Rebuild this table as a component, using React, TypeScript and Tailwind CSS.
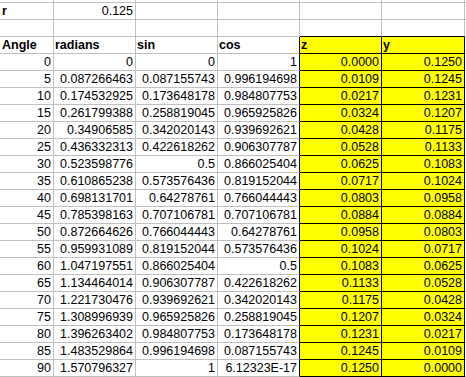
import React from "react";

type Cell = { text?: string; bold?: boolean; right?: boolean };

const widths = ["w-[54px]", "w-[82px]", "w-[82px]", "w-[82px]", "w-[82px]", "w-[83px]"];

const data: string[][] = [
  ["0", "0", "0", "1", "0.0000", "0.1250"],
  ["5", "0.087266463", "0.087155743", "0.996194698", "0.0109", "0.1245"],
  ["10", "0.174532925", "0.173648178", "0.984807753", "0.0217", "0.1231"],
  ["15", "0.261799388", "0.258819045", "0.965925826", "0.0324", "0.1207"],
  ["20", "0.34906585", "0.342020143", "0.939692621", "0.0428", "0.1175"],
  ["25", "0.436332313", "0.422618262", "0.906307787", "0.0528", "0.1133"],
  ["30", "0.523598776", "0.5", "0.866025404", "0.0625", "0.1083"],
  ["35", "0.610865238", "0.573576436", "0.819152044", "0.0717", "0.1024"],
  ["40", "0.698131701", "0.64278761", "0.766044443", "0.0803", "0.0958"],
  ["45", "0.785398163", "0.707106781", "0.707106781", "0.0884", "0.0884"],
  ["50", "0.872664626", "0.766044443", "0.64278761", "0.0958", "0.0803"],
  ["55", "0.959931089", "0.819152044", "0.573576436", "0.1024", "0.0717"],
  ["60", "1.047197551", "0.866025404", "0.5", "0.1083", "0.0625"],
  ["65", "1.134464014", "0.906307787", "0.422618262", "0.1133", "0.0528"],
  ["70", "1.221730476", "0.939692621", "0.342020143", "0.1175", "0.0428"],
  ["75", "1.308996939", "0.965925826", "0.258819045", "0.1207", "0.0324"],
  ["80", "1.396263402", "0.984807753", "0.173648178", "0.1231", "0.0217"],
  ["85", "1.483529864", "0.996194698", "0.087155743", "0.1245", "0.0109"],
  ["90", "1.570796327", "1", "6.12323E-17", "0.1250", "0.0000"],
];

// yellow: columns E/F are filled + black borders; yellowBelow: row above the yellow block
function Row({ cells, yellow, yellowBelow, height = "h-[17px]" }: { cells: Cell[]; yellow?: boolean; yellowBelow?: boolean; height?: string }) {
  return (
    <div className={`flex ${height}`}>
      {widths.map((w, i) => {
        const c = cells[i] || {};
        const isY = yellow && (i === 4 || i === 5);
        const rightBlack = yellow && (i === 3 || i === 4 || i === 5);
        const bottomBlack = (yellow || yellowBelow) && (i === 4 || i === 5);
        return (
          <div
            key={i}
            className={`${w} shrink-0 border-r border-b overflow-hidden whitespace-nowrap leading-[16px] ${
              rightBlack ? "border-r-black" : "border-r-[#c0c0c0]"
            } ${bottomBlack ? "border-b-black" : "border-b-[#c0c0c0]"} ${isY ? "bg-[#ffff00]" : ""} ${
              c.right ? "text-right pr-[2px]" : i === 0 ? "pl-[2px]" : "pl-[1px]"
            } ${c.bold ? "font-bold" : ""}`}
          >
            {c.text}
          </div>
        );
      })}
      <div className="flex-1 border-b border-[#c0c0c0]" />
    </div>
  );
}

export default function App() {
  const head = ["Angle", "radians", "sin", "cos", "z", "y"];
  return (
    <div className="w-[466px] h-[377px] overflow-hidden bg-white text-black text-[12.5px] font-['Liberation_Sans',Arial,sans-serif]">
      <Row cells={[]} height="h-[3px]" />
      <Row cells={[{ text: "r", bold: true }, { text: "0.125", right: true }]} />
      <Row cells={[]} yellowBelow />
      <Row cells={head.map((t) => ({ text: t, bold: true }))} yellow />
      {data.map((r) => (
        <Row key={r[0]} cells={r.map((t) => ({ text: t, right: true }))} yellow />
      ))}
    </div>
  );
}
